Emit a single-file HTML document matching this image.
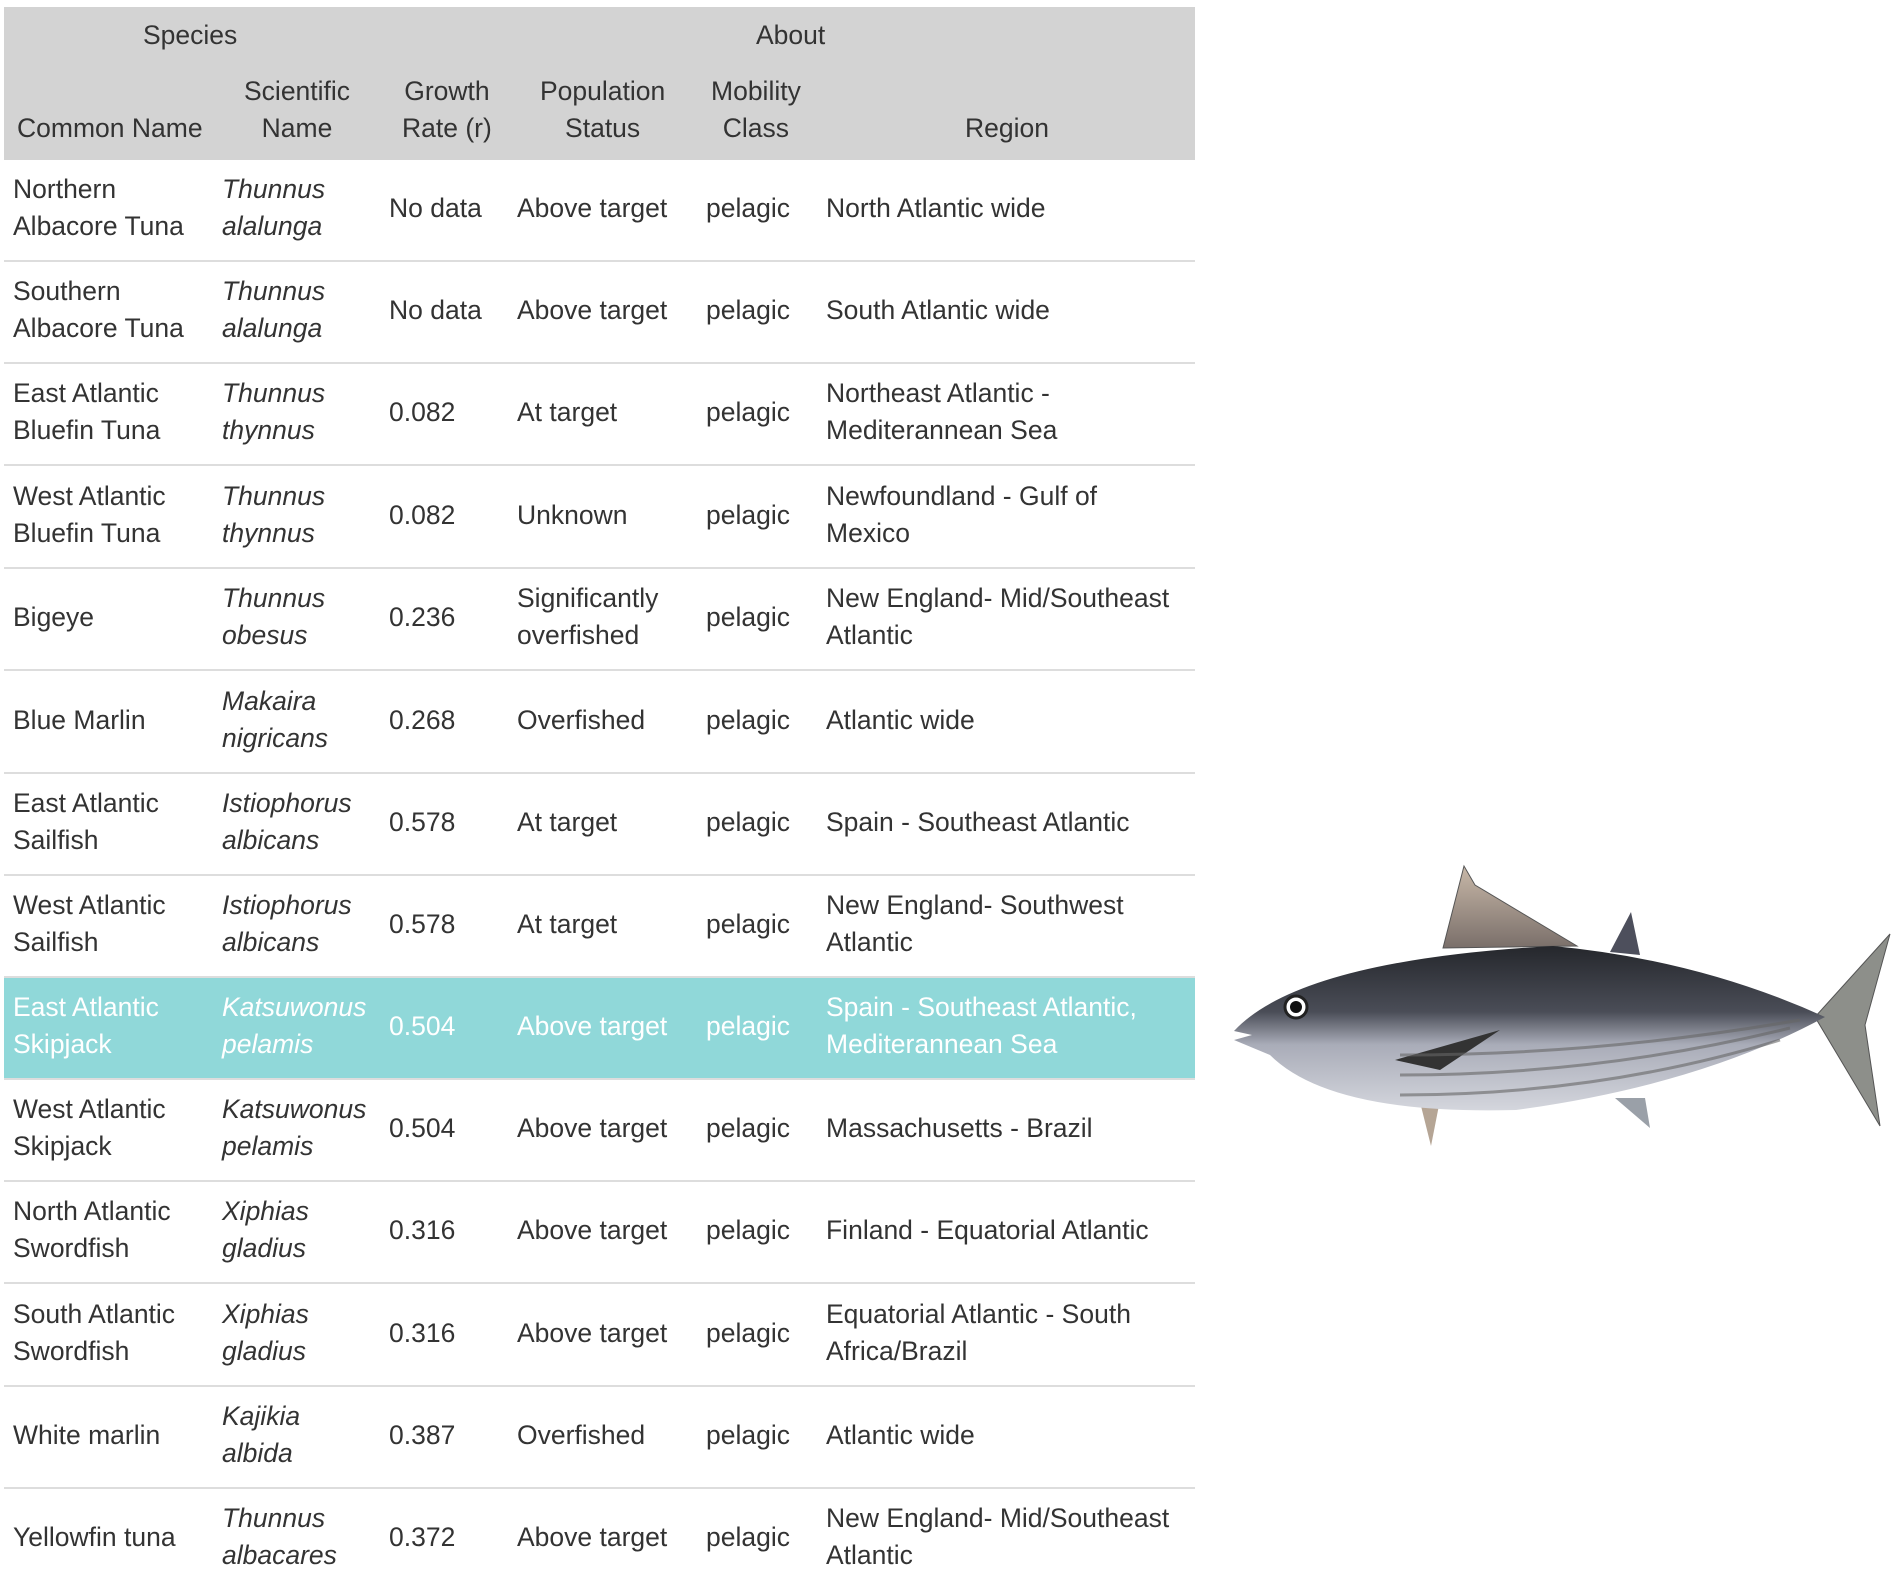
<!DOCTYPE html>
<html><head><meta charset="utf-8"><style>
body{margin:0;width:1902px;height:1592px;background:#fff;overflow:hidden;font-family:"Liberation Sans",Arial,sans-serif;color:#333;font-size:26.5px;position:relative}
.hd{position:absolute;left:4px;top:7px;width:1191px;height:153px;background:#d3d3d3}
.t{position:absolute;line-height:37px}
.row{position:absolute;left:4px;width:1191px;height:102px;border-bottom:2px solid #ddd;box-sizing:border-box}
.row div{position:absolute;top:0;height:96px;display:flex;align-items:center;line-height:37px}
.c1{left:9px}.c2{left:218px;font-style:italic}.c3{left:385px}.c4{left:513px}.c5{left:702px}.c6{left:822px}
.hl{background:#90d8d9;color:#fff}
</style></head><body>
<div class="hd"></div>
<div class="t" style="left:143px;top:17px">Species</div>
<div class="t" style="left:756px;top:17px">About</div>
<div class="t" style="left:17px;top:110px">Common Name</div>
<div class="t" style="left:244px;top:73px;text-align:center">Scientific<br>Name</div>
<div class="t" style="left:402px;top:73px;text-align:center">Growth<br>Rate (r)</div>
<div class="t" style="left:540px;top:73px;text-align:center">Population<br>Status</div>
<div class="t" style="left:711px;top:73px;text-align:center">Mobility<br>Class</div>
<div class="t" style="left:965px;top:110px">Region</div>

<div class="row" style="top:160px"><div class="c1">Northern<br>Albacore Tuna</div><div class="c2">Thunnus<br>alalunga</div><div class="c3">No data</div><div class="c4">Above target</div><div class="c5">pelagic</div><div class="c6">North Atlantic wide</div></div>
<div class="row" style="top:262px"><div class="c1">Southern<br>Albacore Tuna</div><div class="c2">Thunnus<br>alalunga</div><div class="c3">No data</div><div class="c4">Above target</div><div class="c5">pelagic</div><div class="c6">South Atlantic wide</div></div>
<div class="row" style="top:364px"><div class="c1">East Atlantic<br>Bluefin Tuna</div><div class="c2">Thunnus<br>thynnus</div><div class="c3">0.082</div><div class="c4">At target</div><div class="c5">pelagic</div><div class="c6">Northeast Atlantic -<br>Mediterannean Sea</div></div>
<div class="row" style="top:467px"><div class="c1">West Atlantic<br>Bluefin Tuna</div><div class="c2">Thunnus<br>thynnus</div><div class="c3">0.082</div><div class="c4">Unknown</div><div class="c5">pelagic</div><div class="c6">Newfoundland - Gulf of<br>Mexico</div></div>
<div class="row" style="top:569px"><div class="c1">Bigeye</div><div class="c2">Thunnus<br>obesus</div><div class="c3">0.236</div><div class="c4">Significantly<br>overfished</div><div class="c5">pelagic</div><div class="c6">New England- Mid/Southeast<br>Atlantic</div></div>
<div class="row" style="top:672px"><div class="c1">Blue Marlin</div><div class="c2">Makaira<br>nigricans</div><div class="c3">0.268</div><div class="c4">Overfished</div><div class="c5">pelagic</div><div class="c6">Atlantic wide</div></div>
<div class="row" style="top:774px"><div class="c1">East Atlantic<br>Sailfish</div><div class="c2">Istiophorus<br>albicans</div><div class="c3">0.578</div><div class="c4">At target</div><div class="c5">pelagic</div><div class="c6">Spain - Southeast Atlantic</div></div>
<div class="row" style="top:876px"><div class="c1">West Atlantic<br>Sailfish</div><div class="c2">Istiophorus<br>albicans</div><div class="c3">0.578</div><div class="c4">At target</div><div class="c5">pelagic</div><div class="c6">New England- Southwest<br>Atlantic</div></div>
<div class="row hl" style="top:978px"><div class="c1">East Atlantic<br>Skipjack</div><div class="c2">Katsuwonus<br>pelamis</div><div class="c3">0.504</div><div class="c4">Above target</div><div class="c5">pelagic</div><div class="c6">Spain - Southeast Atlantic,<br>Mediterannean Sea</div></div>
<div class="row" style="top:1080px"><div class="c1">West Atlantic<br>Skipjack</div><div class="c2">Katsuwonus<br>pelamis</div><div class="c3">0.504</div><div class="c4">Above target</div><div class="c5">pelagic</div><div class="c6">Massachusetts - Brazil</div></div>
<div class="row" style="top:1182px"><div class="c1">North Atlantic<br>Swordfish</div><div class="c2">Xiphias<br>gladius</div><div class="c3">0.316</div><div class="c4">Above target</div><div class="c5">pelagic</div><div class="c6">Finland - Equatorial Atlantic</div></div>
<div class="row" style="top:1285px"><div class="c1">South Atlantic<br>Swordfish</div><div class="c2">Xiphias<br>gladius</div><div class="c3">0.316</div><div class="c4">Above target</div><div class="c5">pelagic</div><div class="c6">Equatorial Atlantic - South<br>Africa/Brazil</div></div>
<div class="row" style="top:1387px"><div class="c1">White marlin</div><div class="c2">Kajikia<br>albida</div><div class="c3">0.387</div><div class="c4">Overfished</div><div class="c5">pelagic</div><div class="c6">Atlantic wide</div></div>
<div class="row" style="top:1489px;border-bottom:none"><div class="c1">Yellowfin tuna</div><div class="c2">Thunnus<br>albacares</div><div class="c3">0.372</div><div class="c4">Above target</div><div class="c5">pelagic</div><div class="c6">New England- Mid/Southeast<br>Atlantic</div></div>

<svg style="position:absolute;left:0;top:0" width="1902" height="1592">
<defs>
<linearGradient id="b" x1="0" y1="0" x2="0" y2="1"><stop offset="0" stop-color="#25272c"/><stop offset="0.4" stop-color="#4a4d57"/><stop offset="0.6" stop-color="#a9acb8"/><stop offset="1" stop-color="#d4d6dd"/></linearGradient>
<linearGradient id="f" x1="0" y1="0" x2="0" y2="1"><stop offset="0" stop-color="#c8b8a8"/><stop offset="1" stop-color="#7a6f6a"/></linearGradient>
</defs>
<path d="M1443 948 L1464 866 L1475 885 L1577 946 Z" fill="url(#f)" stroke="#555" stroke-width="1"/>
<path d="M1610 952 L1631 912 L1640 955 Z" fill="#4d4f5c"/>
<path d="M1419 1098 L1431 1146 L1440 1100 Z" fill="#b5a595"/>
<path d="M1615 1098 L1650 1128 L1645 1098 Z" fill="#9aa0a8"/>
<path d="M1815 1017 L1890 934 L1865 1025 L1880 1126 Z" fill="#8d8f8a" stroke="#555" stroke-width="1"/>
<path d="M1234 1031 Q1300 960 1553 946 Q1700 960 1825 1017 Q1700 1085 1516 1110 Q1330 1115 1270 1055 L1234 1040 L1252 1035 Z" fill="url(#b)"/>
<path d="M1395 1060 L1500 1030 L1440 1070 Z" fill="#333"/>
<circle cx="1296" cy="1007" r="11" fill="#fff" stroke="#222" stroke-width="3"/>
<circle cx="1296" cy="1007" r="6" fill="#111"/>
<path d="M1400 1055 Q1600 1055 1800 1020 M1400 1075 Q1600 1075 1790 1028 M1400 1095 Q1600 1095 1780 1040" stroke="#666" stroke-width="3" fill="none" opacity=".6"/>
</svg>
</body></html>
